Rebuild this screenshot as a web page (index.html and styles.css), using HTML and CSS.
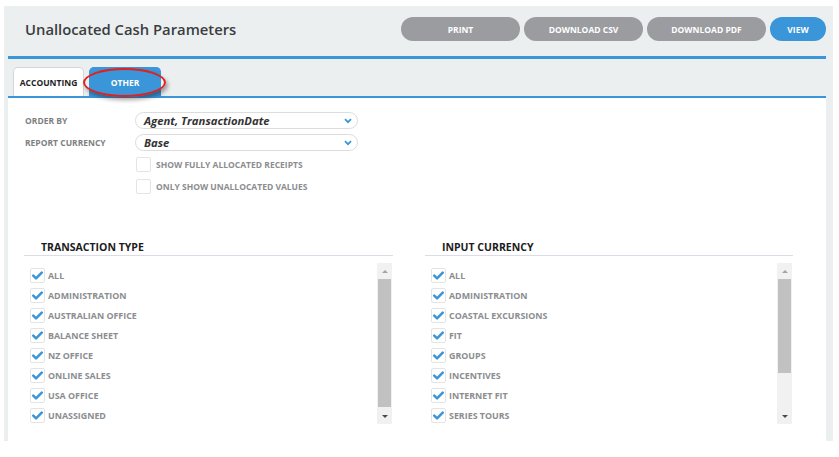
FILE: index.html
```html
<!DOCTYPE html>
<html>
<head>
<meta charset="utf-8">
<link rel="stylesheet" href="styles.css">
</head>
<body>
<div class="panel">
  <div class="header">
    <h1 class="title">Unallocated Cash Parameters</h1>
    <div class="actions">
      <button class="btn">PRINT</button>
      <button class="btn">DOWNLOAD CSV</button>
      <button class="btn">DOWNLOAD PDF</button>
      <button class="btn btn-primary">VIEW</button>
    </div>
  </div>
  <div class="tabbar">
    <div class="tab">ACCOUNTING</div>
    <div class="tab tab-active">OTHER<span class="annot"></span></div>
  </div>
  <div class="card">
    <div class="form">
      <div class="frow">
        <span class="flabel">ORDER BY</span>
        <div class="select"><span>Agent, TransactionDate</span><svg class="chev" viewBox="0 0 8 6" width="8" height="6"><path d="M1 1.2 L4 4.2 L7 1.2" fill="none" stroke="#3a95d9" stroke-width="1.8"/></svg></div>
      </div>
      <div class="frow">
        <span class="flabel">REPORT CURRENCY</span>
        <div class="select"><span>Base</span><svg class="chev" viewBox="0 0 8 6" width="8" height="6"><path d="M1 1.2 L4 4.2 L7 1.2" fill="none" stroke="#3a95d9" stroke-width="1.8"/></svg></div>
      </div>
      <div class="crow"><span class="box"></span><span class="clabel">SHOW FULLY ALLOCATED RECEIPTS</span></div>
      <div class="crow"><span class="box"></span><span class="clabel">ONLY SHOW UNALLOCATED VALUES</span></div>
    </div>
    <div class="sections">
      <div class="section">
        <div class="shead">TRANSACTION TYPE</div>
        <div class="list">
          <div class="items">
            <div class="item"><span class="box"><svg viewBox="0 0 12 10" width="11" height="9"><path d="M1.3 5.2 L4.4 8.2 L10.7 1.8" fill="none" stroke="#3a95d9" stroke-width="2.8" stroke-linecap="round" stroke-linejoin="round"/></svg></span>ALL</div>
            <div class="item"><span class="box"><svg viewBox="0 0 12 10" width="11" height="9"><path d="M1.3 5.2 L4.4 8.2 L10.7 1.8" fill="none" stroke="#3a95d9" stroke-width="2.8" stroke-linecap="round" stroke-linejoin="round"/></svg></span>ADMINISTRATION</div>
            <div class="item"><span class="box"><svg viewBox="0 0 12 10" width="11" height="9"><path d="M1.3 5.2 L4.4 8.2 L10.7 1.8" fill="none" stroke="#3a95d9" stroke-width="2.8" stroke-linecap="round" stroke-linejoin="round"/></svg></span>AUSTRALIAN OFFICE</div>
            <div class="item"><span class="box"><svg viewBox="0 0 12 10" width="11" height="9"><path d="M1.3 5.2 L4.4 8.2 L10.7 1.8" fill="none" stroke="#3a95d9" stroke-width="2.8" stroke-linecap="round" stroke-linejoin="round"/></svg></span>BALANCE SHEET</div>
            <div class="item"><span class="box"><svg viewBox="0 0 12 10" width="11" height="9"><path d="M1.3 5.2 L4.4 8.2 L10.7 1.8" fill="none" stroke="#3a95d9" stroke-width="2.8" stroke-linecap="round" stroke-linejoin="round"/></svg></span>NZ OFFICE</div>
            <div class="item"><span class="box"><svg viewBox="0 0 12 10" width="11" height="9"><path d="M1.3 5.2 L4.4 8.2 L10.7 1.8" fill="none" stroke="#3a95d9" stroke-width="2.8" stroke-linecap="round" stroke-linejoin="round"/></svg></span>ONLINE SALES</div>
            <div class="item"><span class="box"><svg viewBox="0 0 12 10" width="11" height="9"><path d="M1.3 5.2 L4.4 8.2 L10.7 1.8" fill="none" stroke="#3a95d9" stroke-width="2.8" stroke-linecap="round" stroke-linejoin="round"/></svg></span>USA OFFICE</div>
            <div class="item"><span class="box"><svg viewBox="0 0 12 10" width="11" height="9"><path d="M1.3 5.2 L4.4 8.2 L10.7 1.8" fill="none" stroke="#3a95d9" stroke-width="2.8" stroke-linecap="round" stroke-linejoin="round"/></svg></span>UNASSIGNED</div>
          </div>
          <div class="scroll">
            <span class="arrow-up"></span>
            <div class="track"><div class="thumb thumb-long"></div></div>
            <span class="arrow-down"></span>
          </div>
        </div>
      </div>
      <div class="section">
        <div class="shead">INPUT CURRENCY</div>
        <div class="list">
          <div class="items">
            <div class="item"><span class="box"><svg viewBox="0 0 12 10" width="11" height="9"><path d="M1.3 5.2 L4.4 8.2 L10.7 1.8" fill="none" stroke="#3a95d9" stroke-width="2.8" stroke-linecap="round" stroke-linejoin="round"/></svg></span>ALL</div>
            <div class="item"><span class="box"><svg viewBox="0 0 12 10" width="11" height="9"><path d="M1.3 5.2 L4.4 8.2 L10.7 1.8" fill="none" stroke="#3a95d9" stroke-width="2.8" stroke-linecap="round" stroke-linejoin="round"/></svg></span>ADMINISTRATION</div>
            <div class="item"><span class="box"><svg viewBox="0 0 12 10" width="11" height="9"><path d="M1.3 5.2 L4.4 8.2 L10.7 1.8" fill="none" stroke="#3a95d9" stroke-width="2.8" stroke-linecap="round" stroke-linejoin="round"/></svg></span>COASTAL EXCURSIONS</div>
            <div class="item"><span class="box"><svg viewBox="0 0 12 10" width="11" height="9"><path d="M1.3 5.2 L4.4 8.2 L10.7 1.8" fill="none" stroke="#3a95d9" stroke-width="2.8" stroke-linecap="round" stroke-linejoin="round"/></svg></span>FIT</div>
            <div class="item"><span class="box"><svg viewBox="0 0 12 10" width="11" height="9"><path d="M1.3 5.2 L4.4 8.2 L10.7 1.8" fill="none" stroke="#3a95d9" stroke-width="2.8" stroke-linecap="round" stroke-linejoin="round"/></svg></span>GROUPS</div>
            <div class="item"><span class="box"><svg viewBox="0 0 12 10" width="11" height="9"><path d="M1.3 5.2 L4.4 8.2 L10.7 1.8" fill="none" stroke="#3a95d9" stroke-width="2.8" stroke-linecap="round" stroke-linejoin="round"/></svg></span>INCENTIVES</div>
            <div class="item"><span class="box"><svg viewBox="0 0 12 10" width="11" height="9"><path d="M1.3 5.2 L4.4 8.2 L10.7 1.8" fill="none" stroke="#3a95d9" stroke-width="2.8" stroke-linecap="round" stroke-linejoin="round"/></svg></span>INTERNET FIT</div>
            <div class="item"><span class="box"><svg viewBox="0 0 12 10" width="11" height="9"><path d="M1.3 5.2 L4.4 8.2 L10.7 1.8" fill="none" stroke="#3a95d9" stroke-width="2.8" stroke-linecap="round" stroke-linejoin="round"/></svg></span>SERIES TOURS</div>
          </div>
          <div class="scroll">
            <span class="arrow-up"></span>
            <div class="track"><div class="thumb thumb-short"></div></div>
            <span class="arrow-down"></span>
          </div>
        </div>
      </div>
    </div>
  </div>
</div>
</body>
</html>
```
FILE: styles.css
```css
* { box-sizing: border-box; }
body {
  margin: 0;
  background: #ffffff;
  font-family: "Open Sans", "Liberation Sans", sans-serif;
}
.panel {
  margin: 6px 0 0 4px;
  width: 829px;
  height: 435px;
  background: #ebeff0;
  padding: 0 7px 0 4px;
  display: flex;
  flex-direction: column;
}
.header {
  height: 53px;
  padding-top: 11px;
  display: flex;
  justify-content: space-between;
  align-items: flex-start;
  border-bottom: 3px solid #3a95d9;
}
.title {
  margin: 0;
  padding-left: 17px;
  line-height: 24px;
  font-size: 14.8px;
  font-weight: 600;
  color: #3b3d40;
}
.actions { display: flex; gap: 4px; }
.btn {
  width: 119px;
  height: 24px;
  border: none;
  border-radius: 12px;
  background: #9a9c9f;
  color: #fff;
  font-family: "Open Sans", "Liberation Sans", sans-serif;
  font-size: 8.5px;
  font-weight: 700;
  padding: 0;
}
.btn-primary { width: 56px; background: #3a95d9; }
.tabbar {
  display: flex;
  gap: 5px;
  padding: 8px 0 0 5px;
  border-bottom: 2px solid #3a95d9;
}
.tab {
  position: relative;
  height: 29px;
  width: 71px;
  border-radius: 5px 5px 0 0;
  background: #fff;
  border: 1px solid #d4d6d8;
  border-bottom: none;
  display: flex;
  align-items: center;
  justify-content: center;
  font-size: 8.5px;
  font-weight: 700;
  color: #1e1e1e;
}
.tab-active {
  width: 72px;
  background: #3a95d9;
  border-color: #3a95d9;
  color: #fff;
}
.annot {
  position: absolute;
  left: -7px;
  top: 0px;
  width: 83px;
  height: 29px;
  border: 2px solid #e3201b;
  border-radius: 50%;
  box-shadow: 2px 3px 4px rgba(0,0,0,0.35);
}
.card {
  flex: 1;
  background: #fff;
  padding: 14px 0 0 16px;
}
.form { padding-left: 1px; }
.frow {
  display: flex;
  align-items: center;
  height: 17px;
  margin-bottom: 5px;
}
.flabel {
  width: 110px;
  font-size: 8.5px;
  font-weight: 700;
  color: #7d7f82;
}
.select {
  width: 223px;
  height: 17px;
  border: 1px solid #dcdcdc;
  border-radius: 9px;
  display: flex;
  align-items: center;
  justify-content: space-between;
  padding: 0 5px 0 8px;
  font-size: 11.3px;
  font-style: italic;
  font-weight: 700;
  color: #333;
}
.chev { display: block; }
.crow {
  display: flex;
  align-items: center;
  gap: 5px;
  height: 15px;
  margin: 6px 0 0 111px;
}
.crow + .crow { margin-top: 7px; }
.box {
  width: 15px;
  height: 15px;
  flex: none;
  border: 1px solid #e4e4e4;
  border-radius: 2px;
  background: #fff;
  display: flex;
  align-items: center;
  justify-content: center;
}
.clabel {
  font-size: 8.5px;
  font-weight: 700;
  color: #8b8d90;
}
.item {
  font-size: 8.9px;
  font-weight: 700;
  color: #8b8d90;
}
.sections {
  display: grid;
  grid-template-columns: 369px 368px;
  gap: 32px;
  margin-top: 45px;
}
.shead {
  height: 17px;
  line-height: 17px;
  padding-left: 17px;
  border-bottom: 1px solid #dcdce8;
  font-size: 10.5px;
  font-weight: 700;
  color: #1c1c1c;
}
.list {
  margin-top: 7px;
  height: 161px;
  display: flex;
}
.items {
  flex: 1;
  padding: 2px 0 0 6px;
}
.item {
  height: 20px;
  display: flex;
  align-items: center;
  gap: 3px;
}
.scroll {
  width: 15px;
  margin-right: 1px;
  background: #f1f1f1;
  display: flex;
  flex-direction: column;
  align-items: center;
}
.arrow-up, .arrow-down {
  height: 16px;
  width: 100%;
  display: flex;
  align-items: center;
  justify-content: center;
}
.arrow-up::before {
  content: "";
  border-left: 3px solid transparent;
  border-right: 3px solid transparent;
  border-bottom: 3px solid #a3a3a3;
}
.arrow-down::before {
  content: "";
  border-left: 3px solid transparent;
  border-right: 3px solid transparent;
  border-top: 3px solid #4a4a4a;
}
.track { flex: 1; width: 100%; padding: 0 1px; }
.thumb { background: #c1c1c1; width: 100%; }
.thumb-long { height: 128px; }
.thumb-short { height: 94px; }
```
